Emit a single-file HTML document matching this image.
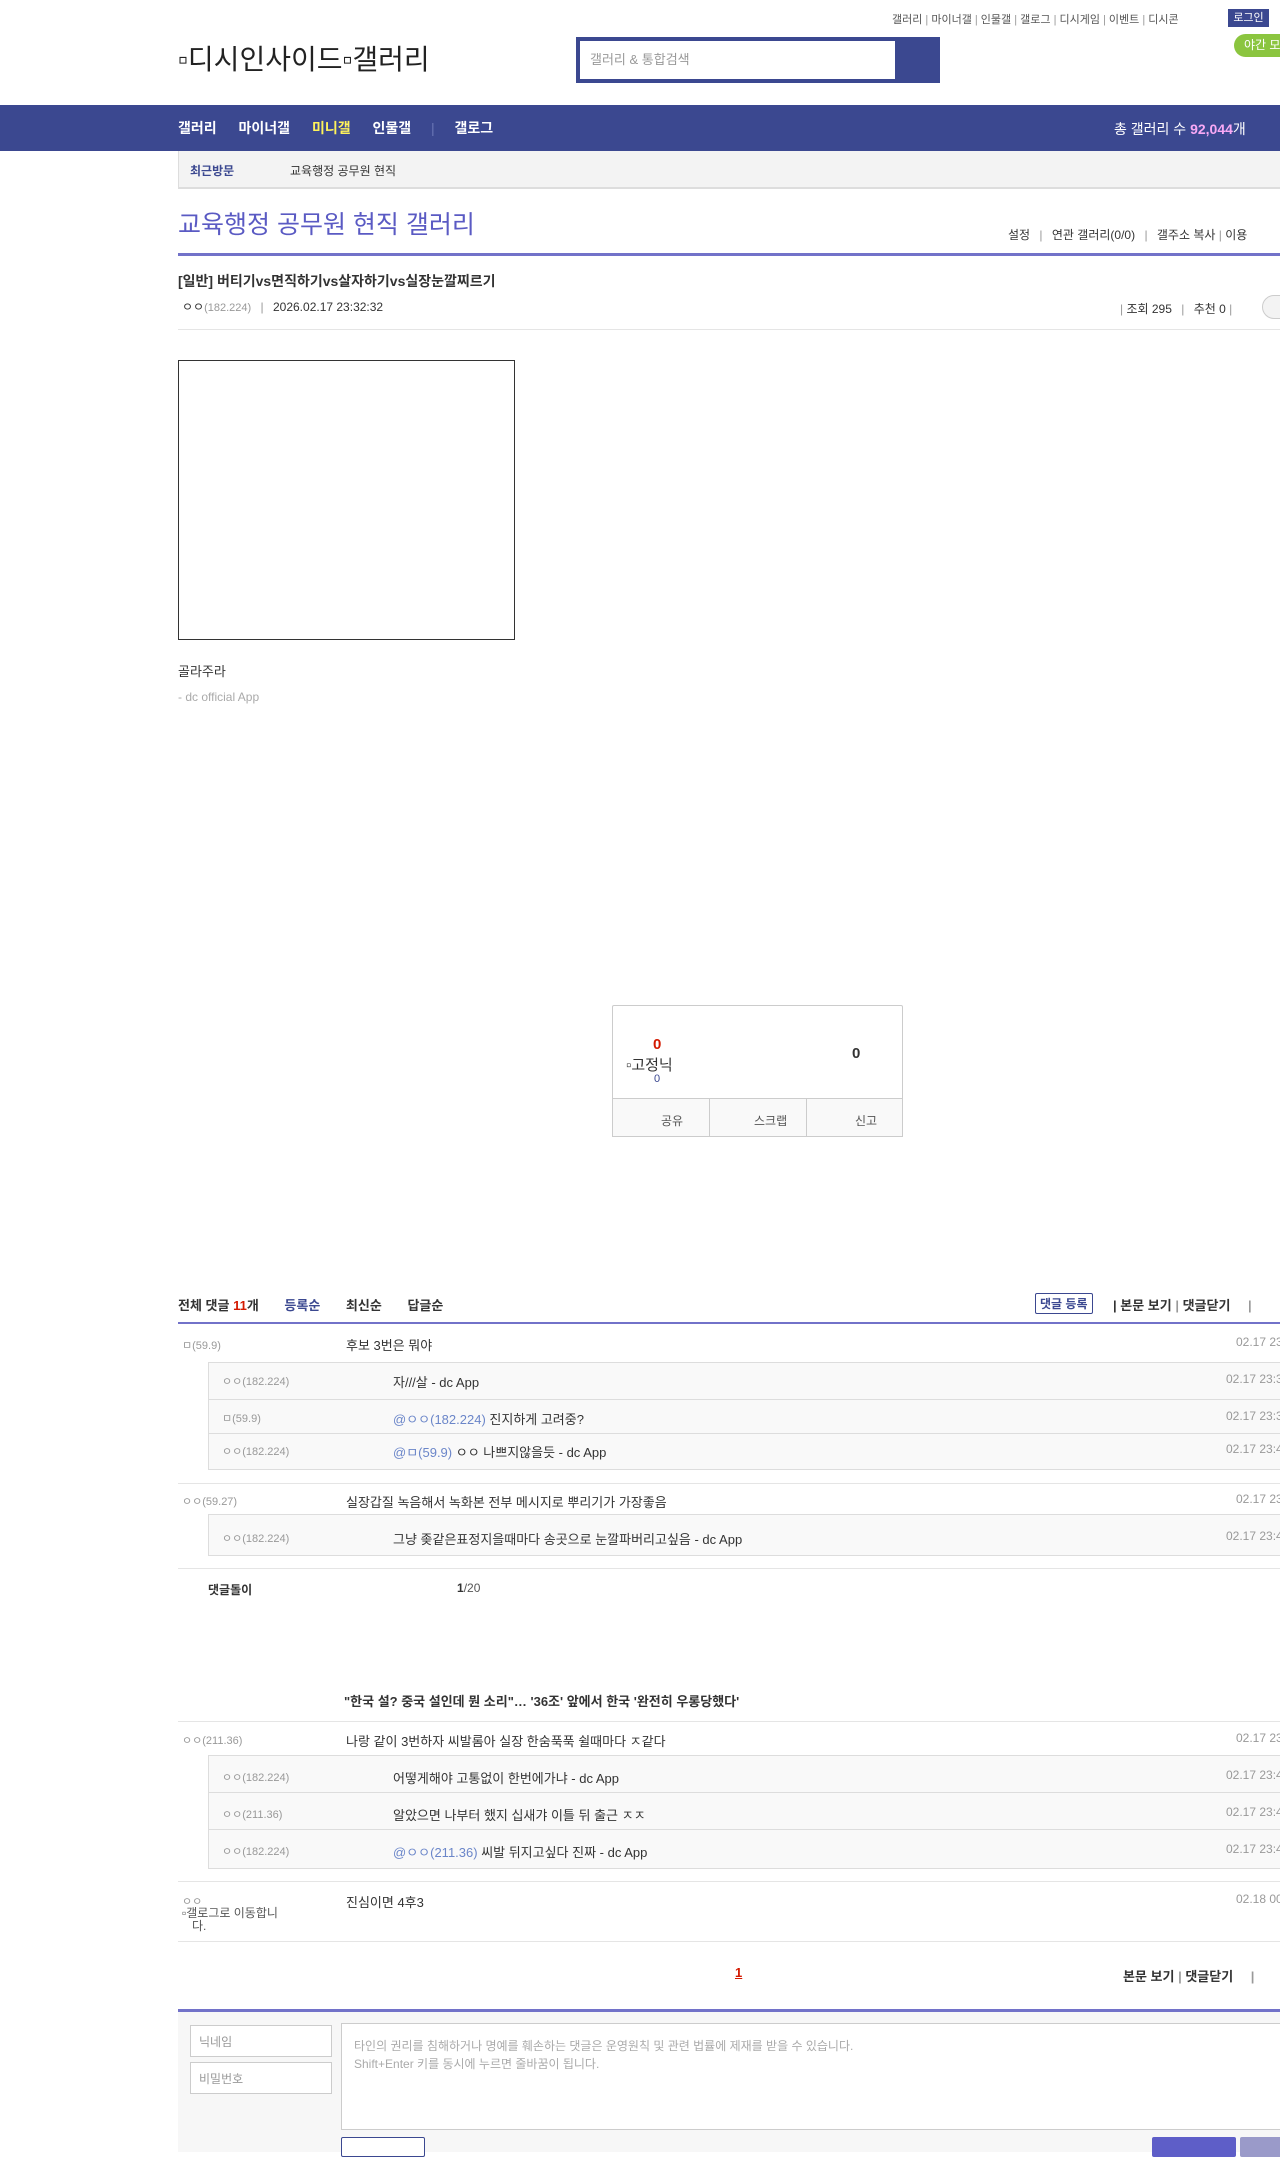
<!DOCTYPE html>
<html><head><meta charset="utf-8">
<style>
*{margin:0;padding:0;box-sizing:border-box}
body{width:1280px;height:2140px;overflow:hidden;position:relative;background:#fff;font-family:"Liberation Sans","Noto Sans CJK KR",sans-serif;font-size:13px;color:#333}
.a{position:absolute;white-space:nowrap}
.g{color:#999}
.sm{font-size:11px}
.ln{position:absolute;height:1px;background:#e5e5e5;left:178px;width:1102px}
.box{position:absolute;left:208px;width:1080px;background:#f9f9f9;border:1px solid #ddd}
.box .r{position:absolute;left:0;right:0;border-top:1px solid #ddd}
.date{color:#999;font-size:12px}
.w{position:absolute;left:0;top:5px;width:1280px;height:2140px}
</style></head><body>
<!-- top -->
<div class="a sm" style="left:892px;top:11px;color:#555;font-size:11px">갤러리 <span class="g">|</span> 마이너갤 <span class="g">|</span> 인물갤 <span class="g">|</span> 갤로그 <span class="g">|</span> 디시게임 <span class="g">|</span> 이벤트 <span class="g">|</span> 디시콘</div>
<div class="a" style="left:1228px;top:9px;width:41px;height:18px;background:#3b4890;color:#fff;font-size:11px;text-align:center;line-height:18px">로그인</div>
<div class="a" style="left:1234px;top:34px;width:60px;height:23px;background:#8bc53f;border-radius:12px;color:#fff;font-size:12px;line-height:23px;padding-left:10px">야간 모드</div>
<div class="a" style="left:178px;top:38px;font-size:28px;color:#222">▫디시인사이드▫갤러리</div>
<div class="a" style="left:576px;top:37px;width:364px;height:46px;background:#3b4890"></div>
<div class="a" style="left:580px;top:41px;width:315px;height:38px;background:#fff;color:#999;font-size:13px;line-height:38px;padding-left:10px">갤러리 &amp; 통합검색</div>
<!-- nav -->
<div class="a" style="left:0;top:105px;width:1280px;height:46px;background:#3b4890"></div>
<div class="a" style="left:178px;top:118px;color:#fff;font-size:14px;font-weight:bold">갤러리 <span style="margin-left:18px">마이너갤</span> <span style="margin-left:18px;color:#fff35a">미니갤</span> <span style="margin-left:18px">인물갤</span> <span style="margin-left:16px;color:#6a75b5;font-weight:normal">|</span> <span style="margin-left:16px">갤로그</span></div>
<div class="a" style="left:1114px;top:119px;color:#fff;font-size:14px">총 갤러리 수 <b style="color:#f9a9f5">92,044</b>개</div>
<!-- recent -->
<div class="a" style="left:178px;top:151px;width:1110px;height:38px;background:#f3f3f3;border-left:1px solid #ddd;border-bottom:2px solid #ddd"></div>
<div class="a" style="left:190px;top:162px;font-size:12px;color:#3b4890;font-weight:bold">최근방문</div>
<div class="a" style="left:290px;top:162px;font-size:12px;color:#333">교육행정 공무원 현직</div>
<!-- title -->
<div class="a" style="left:178px;top:205px;font-size:25px;color:#5a5ac3">교육행정 공무원 현직 갤러리</div>
<div class="a" style="left:1008px;top:226px;font-size:12px;color:#333">설정 <span class="g" style="margin:0 6px">|</span> 연관 갤러리(0/0) <span class="g" style="margin:0 6px">|</span> 갤주소 복사 <span class="g">|</span> 이용</div>
<div class="a" style="left:178px;top:253px;width:1110px;height:3px;background:#7272c9"></div>
<div class="a" style="left:178px;top:271px;font-size:14px;font-weight:bold;color:#333">[일반] 버티기vs면직하기vs살자하기vs실장눈깔찌르기</div>
<div class="a" style="left:182px;top:298px;font-size:12px">ㅇㅇ<span class="g sm">(182.224)</span> <span class="g" style="margin:0 6px">|</span> 2026.02.17 23:32:32</div>
<div class="a" style="left:1120px;top:300px;font-size:12px"><span class="g">|</span> 조회 295 <span class="g" style="margin:0 6px">|</span> 추천 0 <span class="g">|</span></div>
<div class="a" style="left:1262px;top:295px;width:30px;height:24px;border:1px solid #ccc;border-radius:12px;background:#f3f3f3"></div>
<div class="ln" style="top:329px"></div>
<!-- image -->
<div class="a" style="left:178px;top:360px;width:337px;height:280px;border:1px solid #333"></div>
<div class="a" style="left:178px;top:661px">골라주라</div>
<div class="a g" style="left:178px;top:690px;font-size:12px;color:#aaa">- dc official App</div>
<div class="w">
<!-- recommend -->
<div class="a" style="left:612px;top:1000px;width:291px;height:132px;border:1px solid #ccc;border-radius:2px"></div>
<div class="a" style="left:612px;top:1093px;width:291px;height:39px;background:#f9f9f9;border:1px solid #ccc"></div>
<div class="a" style="left:709px;top:1093px;width:1px;height:39px;background:#ccc"></div>
<div class="a" style="left:806px;top:1093px;width:1px;height:39px;background:#ccc"></div>
<div class="a" style="left:653px;top:1031px;color:#d31900;font-weight:bold;font-size:15px">0</div>
<div class="a" style="left:626px;top:1049px;font-size:15px;color:#333">▫고정닉</div>
<div class="a" style="left:654px;top:1068px;font-size:11px;color:#3b4890">0</div>
<div class="a" style="left:852px;top:1040px;font-weight:bold;font-size:15px;color:#333">0</div>
<div class="a" style="left:661px;top:1107px;font-size:12px;color:#555">공유</div>
<div class="a" style="left:754px;top:1107px;font-size:12px;color:#555">스크랩</div>
<div class="a" style="left:855px;top:1107px;font-size:12px;color:#555">신고</div>
<!-- comments header -->
<div class="a" style="left:178px;top:1290px;font-weight:bold;font-size:13px">전체 댓글 <span style="color:#d31900">11</span>개 <span style="margin-left:22px;color:#3b4890">등록순</span> <span style="margin-left:22px">최신순</span> <span style="margin-left:22px">답글순</span></div>
<div class="a" style="left:1035px;top:1288px;border:1px solid #3b4890;padding:1px 4px;font-weight:bold;font-size:12px;color:#3b4890;border-radius:2px">댓글 등록</div>
<div class="a" style="left:1113px;top:1290px;font-weight:bold;font-size:13px">| 본문 보기 <span class="g">|</span> 댓글닫기 <span class="g" style="margin-left:14px">|</span></div>
<div class="a" style="left:178px;top:1317px;width:1110px;height:2px;background:#7272c9"></div>

<div class="a sm g" style="left:182px;top:1332px">ㅁ(59.9)</div>
<div class="a" style="left:346px;top:1330px">후보 3번은 뭐야</div>
<div class="a date" style="left:1236px;top:1330px">02.17 23:3</div>
<div class="box" style="top:1357px;height:108px"><div class="r" style="top:36px"></div><div class="r" style="top:70px"></div></div>
<div class="a sm g" style="left:222px;top:1368px">ㅇㅇ(182.224)</div><div class="a" style="left:393px;top:1367px">자///살 - dc App</div><div class="a date" style="left:1226px;top:1367px">02.17 23:3</div>
<div class="a sm g" style="left:222px;top:1405px">ㅁ(59.9)</div><div class="a" style="left:393px;top:1404px"><span style="color:#6b86c9">@ㅇㅇ(182.224)</span> 진지하게 고려중?</div><div class="a date" style="left:1226px;top:1404px">02.17 23:3</div>
<div class="a sm g" style="left:222px;top:1438px">ㅇㅇ(182.224)</div><div class="a" style="left:393px;top:1437px"><span style="color:#6b86c9">@ㅁ(59.9)</span> ㅇㅇ 나쁘지않을듯 - dc App</div><div class="a date" style="left:1226px;top:1437px">02.17 23:4</div>
<div class="ln" style="top:1478px"></div>
<div class="a sm g" style="left:182px;top:1488px">ㅇㅇ(59.27)</div>
<div class="a" style="left:346px;top:1487px">실장갑질 녹음해서 녹화본 전부 메시지로 뿌리기가 가장좋음</div>
<div class="a date" style="left:1236px;top:1487px">02.17 23:3</div>
<div class="box" style="top:1509px;height:42px"></div>
<div class="a sm g" style="left:222px;top:1525px">ㅇㅇ(182.224)</div><div class="a" style="left:393px;top:1524px">그냥 좆같은표정지을때마다 송곳으로 눈깔파버리고싶음 - dc App</div><div class="a date" style="left:1226px;top:1524px">02.17 23:4</div>
<div class="ln" style="top:1563px"></div>
<div class="a" style="left:208px;top:1576px;font-weight:bold;font-size:12px">댓글돌이</div>
<div class="a" style="left:457px;top:1576px;font-size:12px;color:#555"><b style="color:#333">1</b>/20</div>
<div class="a" style="left:344px;top:1686px;font-weight:bold;font-size:13px">"한국 설? 중국 설인데 뭔 소리"… '36조' 앞에서 한국 '완전히 우롱당했다'</div>
<div class="ln" style="top:1716px"></div>
<div class="a sm g" style="left:182px;top:1727px">ㅇㅇ(211.36)</div>
<div class="a" style="left:346px;top:1726px">나랑 같이 3번하자 씨발롬아 실장 한숨푹푹 쉴때마다 ㅈ같다</div>
<div class="a date" style="left:1236px;top:1726px">02.17 23:3</div>
<div class="box" style="top:1750px;height:114px"><div class="r" style="top:36px"></div><div class="r" style="top:73px"></div></div>
<div class="a sm g" style="left:222px;top:1764px">ㅇㅇ(182.224)</div><div class="a" style="left:393px;top:1763px">어떻게해야 고통없이 한번에가냐 - dc App</div><div class="a date" style="left:1226px;top:1763px">02.17 23:4</div>
<div class="a sm g" style="left:222px;top:1801px">ㅇㅇ(211.36)</div><div class="a" style="left:393px;top:1800px">알았으면 나부터 했지 십새갸 이틀 뒤 출근 ㅈㅈ</div><div class="a date" style="left:1226px;top:1800px">02.17 23:4</div>
<div class="a sm g" style="left:222px;top:1838px">ㅇㅇ(182.224)</div><div class="a" style="left:393px;top:1837px"><span style="color:#6b86c9">@ㅇㅇ(211.36)</span> 씨발 뒤지고싶다 진짜 - dc App</div><div class="a date" style="left:1226px;top:1837px">02.17 23:4</div>
<div class="ln" style="top:1876px"></div>
<div class="a sm g" style="left:182px;top:1888px">ㅇㅇ</div>
<div class="a" style="left:182px;top:1902px;font-size:12px;color:#555;line-height:13px;white-space:normal;width:130px">▫갤로그로 이동합니<br>&nbsp;&nbsp;&nbsp;다.</div>
<div class="a" style="left:346px;top:1887px">진심이면 4후3</div>
<div class="a date" style="left:1236px;top:1887px">02.18 00:</div>
<div class="ln" style="top:1936px"></div>
<div class="a" style="left:735px;top:1960px;color:#d31900;font-weight:bold;text-decoration:underline">1</div>
<div class="a" style="left:1123px;top:1961px;font-weight:bold;font-size:13px">본문 보기 <span class="g">|</span> 댓글닫기 <span class="g" style="margin-left:14px">|</span></div>
<!-- form -->
<div class="a" style="left:178px;top:2004px;width:1110px;height:3px;background:#7272c9"></div>
<div class="a" style="left:178px;top:2007px;width:1110px;height:140px;background:#f7f7f7"></div>
<div class="a" style="left:190px;top:2020px;width:142px;height:32px;background:#fff;border:1px solid #ccc;color:#999;font-size:12px;padding:7px 8px">닉네임</div>
<div class="a" style="left:190px;top:2057px;width:142px;height:32px;background:#fff;border:1px solid #ccc;color:#999;font-size:12px;padding:7px 8px">비밀번호</div>
<div class="a" style="left:341px;top:2018px;width:950px;height:107px;background:#fff;border:1px solid #ccc;color:#aaa;font-size:12px;padding:13px 12px;line-height:18px;white-space:normal">타인의 권리를 침해하거나 명예를 훼손하는 댓글은 운영원칙 및 관련 법률에 제재를 받을 수 있습니다.<br>Shift+Enter 키를 동시에 누르면 줄바꿈이 됩니다.</div>
<div class="a" style="left:341px;top:2132px;width:84px;height:20px;background:#fff;border:1px solid #3b4890;border-radius:2px"></div>
<div class="a" style="left:1152px;top:2132px;width:84px;height:20px;background:#5e5ec8;border-radius:2px"></div>
<div class="a" style="left:1240px;top:2132px;width:60px;height:20px;background:#9a9ac9;border-radius:2px"></div>
</div>
</body></html>
